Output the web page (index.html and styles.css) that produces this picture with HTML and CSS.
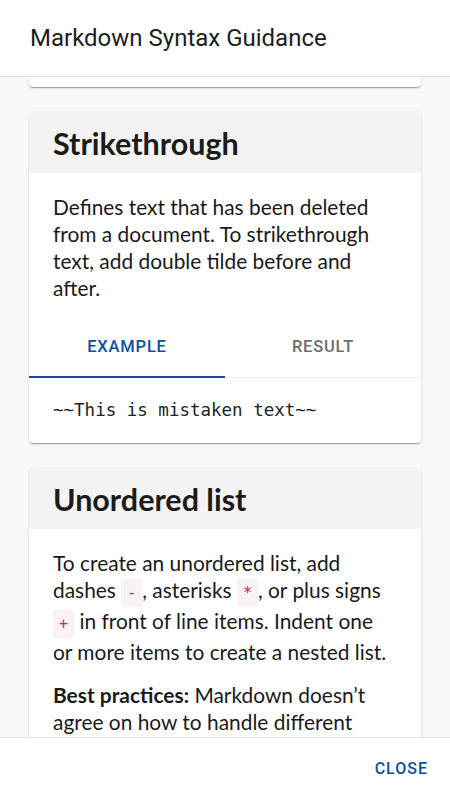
FILE: index.html
```html
<!DOCTYPE html>
<html lang="en">
<head>
<meta charset="utf-8">
<title>Markdown Syntax Guidance</title>
<link rel="stylesheet" href="styles.css">
</head>
<body>
<div class="dialog">
  <header class="dialog-title">Markdown Syntax Guidance</header>
  <main class="dialog-content">
    <div class="card card-tail"></div>

    <section class="card">
      <div class="card-header"><h2>Strikethrough</h2></div>
      <div class="card-body">
        <p>Defines text that has been deleted from a document. To strikethrough text, add double tilde before and after.</p>
      </div>
      <div class="tabs">
        <div class="tab active">EXAMPLE</div>
        <div class="tab">RESULT</div>
      </div>
      <pre class="example">~~This is mistaken text~~</pre>
    </section>

    <section class="card">
      <div class="card-header"><h2>Unordered list</h2></div>
      <div class="card-body">
        <p>To create an unordered list, add dashes <code>-</code>, asterisks <code>*</code>, or plus signs <code>+</code> in front of line items. Indent one or more items to create a nested list.</p>
        <p><strong>Best practices:</strong> Markdown doesn’t agree on how to handle different delimiters in the same list. For compatibility, don’t mix and match delimiters in the same list.</p>
      </div>
    </section>
  </main>
  <footer class="dialog-actions">
    <button class="btn-text" type="button">CLOSE</button>
  </footer>
</div>
</body>
</html>
```

FILE: styles.css
```css
* { box-sizing: border-box; }
html, body { margin: 0; padding: 0; }
body {
  width: 450px;
  height: 800px;
  overflow: hidden;
  background: #ffffff;
  font-family: Roboto, "Liberation Sans", sans-serif;
}
.dialog {
  display: flex;
  flex-direction: column;
  height: 800px;
}
.dialog-title {
  height: 77px;
  flex: none;
  padding: 24px 30px 0;
  font-size: 24px;
  line-height: 28px;
  color: #1d1d1d;
  border-bottom: 1px solid #e2e2e2;
  background: #fff;
}
.dialog-content {
  flex: 1;
  overflow: hidden;
  background: #f8f8f8;
  padding: 0 29px;
}
.card {
  background: #fff;
  border-radius: 4px;
  box-shadow: 0 2px 1px -1px rgba(0,0,0,0.2), 0 1px 1px 0 rgba(0,0,0,0.14), 0 1px 3px 0 rgba(0,0,0,0.12);
  margin-bottom: 25px;
  overflow: hidden;
  font-family: Lato, "Open Sans", sans-serif;
  color: #1a1a1a;
}
.card-tail {
  height: 10px;
  border-radius: 0 0 4px 4px;
}
.card-header {
  background: #f3f3f3;
  height: 61px;
  padding: 0 24px;
  display: flex;
  align-items: center;
}
.card-header h2 {
  margin: 0;
  font-size: 30.5px;
  font-weight: 700;
  line-height: 36px;
  color: #1b1b1b;
}
.card-body {
  padding: 20px 24px 0;
}
.card-body p {
  margin: 0 0 16px;
  font-size: 20.9px;
  line-height: 27px;
}
.card-body code {
  font-family: "DejaVu Sans Mono", monospace;
  font-size: 15px;
  color: #c7254e;
  background: #f9f2f4;
  padding: 5px 6px;
  border-radius: 2px;
}
.tabs {
  display: flex;
  height: 61px;
  border-bottom: 1px solid #ececec;
}
.tab {
  flex: 1;
  display: flex;
  align-items: center;
  justify-content: center;
  font-family: Roboto, sans-serif;
  font-weight: 500;
  font-size: 16.5px;
  letter-spacing: 0.8px;
  color: #6e6e6e;
  border-bottom: 2px solid transparent;
  margin-bottom: -1px;
}
.tab.active {
  color: #0b4fa0;
  border-bottom-color: #0b4fa0;
}
.example {
  margin: 0;
  padding: 22px 24px;
  font-family: "DejaVu Sans Mono", monospace;
  font-size: 17.5px;
  line-height: 21px;
  color: #1e1e1e;
}
.dialog-actions {
  flex: none;
  height: 63px;
  border-top: 1px solid #e2e2e2;
  background: #fff;
  display: flex;
  align-items: center;
  justify-content: flex-end;
  padding: 0 14px;
}
.btn-text {
  border: 0;
  background: transparent;
  font-family: Roboto, sans-serif;
  font-weight: 500;
  font-size: 16px;
  letter-spacing: 1px;
  color: #0b4fa0;
  padding: 8px 8px;
  margin-top: -2px;
}
```
